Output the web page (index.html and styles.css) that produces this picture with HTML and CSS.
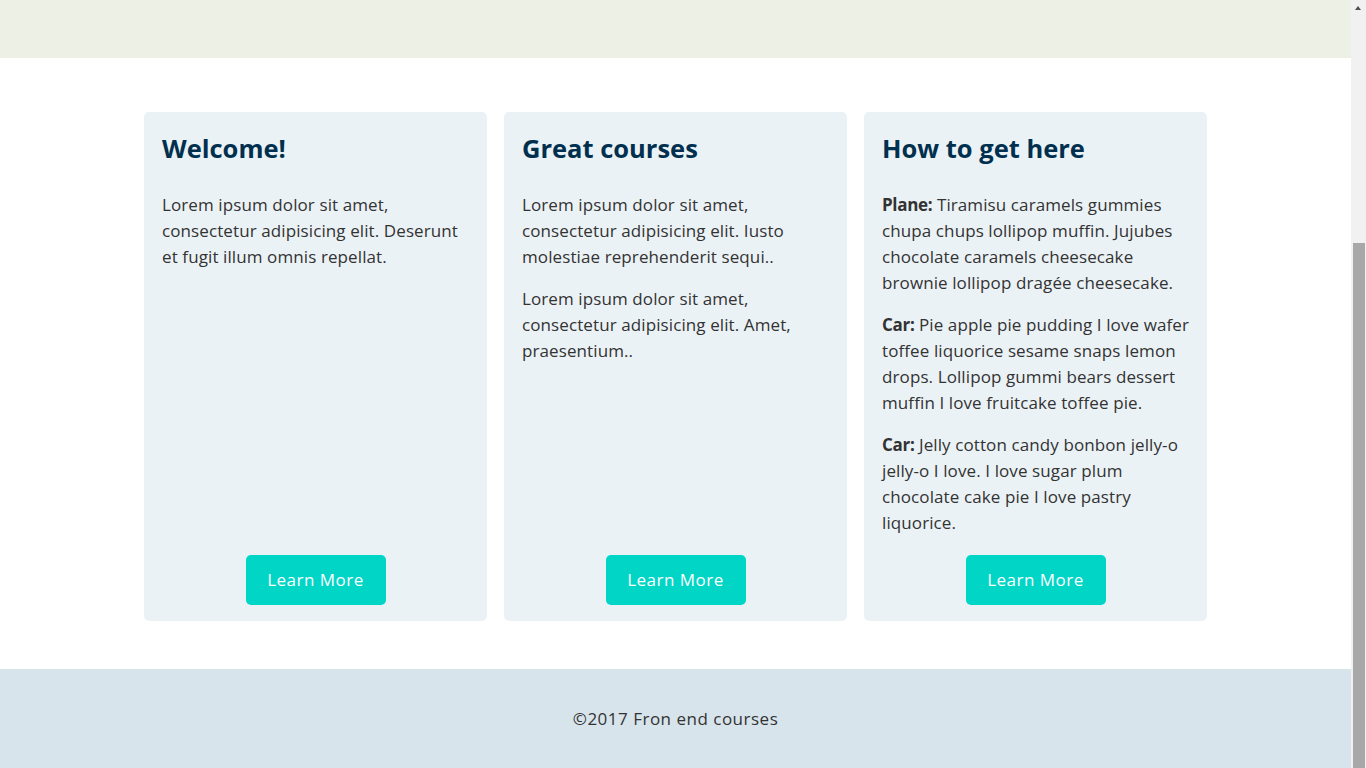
FILE: index.html
```html
<!DOCTYPE html>
<html lang="en">
<head>
<meta charset="utf-8">
<title>Fron end courses</title>
<link rel="stylesheet" href="styles.css">
</head>
<body>
<div class="page">
  <header class="site-header"></header>
  <main class="features">
    <div class="container">
      <section class="card">
        <h2 class="card-title">Welcome!</h2>
        <p>Lorem ipsum dolor sit amet, consectetur adipisicing elit. Deserunt et fugit illum omnis repellat.</p>
        <a class="btn" href="#">Learn More</a>
      </section>
      <section class="card">
        <h2 class="card-title">Great courses</h2>
        <p>Lorem ipsum dolor sit amet, consectetur adipisicing elit. Iusto molestiae reprehenderit sequi..</p>
        <p>Lorem ipsum dolor sit amet, consectetur adipisicing elit. Amet, praesentium..</p>
        <a class="btn" href="#">Learn More</a>
      </section>
      <section class="card">
        <h2 class="card-title">How to get here</h2>
        <p><strong>Plane:</strong> Tiramisu caramels gummies chupa chups lollipop muffin. Jujubes chocolate caramels cheesecake brownie lollipop dragée cheesecake.</p>
        <p><strong>Car:</strong> Pie apple pie pudding I love wafer toffee liquorice sesame snaps lemon drops. Lollipop gummi bears dessert muffin I love fruitcake toffee pie.</p>
        <p><strong>Car:</strong> Jelly cotton candy bonbon <span class="nowrap">jelly-o</span> <span class="nowrap">jelly-o</span> I love. I love sugar plum chocolate cake pie I love pastry liquorice.</p>
        <a class="btn" href="#">Learn More</a>
      </section>
    </div>
  </main>
  <footer class="site-footer">
    <p>©2017 Fron end courses</p>
  </footer>
</div>
<div class="scrollbar" aria-hidden="true">
  <span class="scrollbar-arrow"></span>
  <span class="scrollbar-thumb"></span>
</div>
</body>
</html>
```

FILE: styles.css
```css
body {
  margin: 0;
  font-family: "Open Sans", "Noto Sans", sans-serif;
  font-size: 17px;
  line-height: 26px;
  letter-spacing: 0.1px;
  color: #333;
  background: #fff;
}
.page {
  margin-right: 15px;
}
.site-header {
  height: 58px;
  background: #edf0e4;
}
.features {
  padding: 54px 0 48px;
}
.container {
  width: 1063px;
  margin: 0 auto;
  display: grid;
  grid-template-columns: repeat(3, 1fr);
  gap: 17px;
}
.card {
  background: #ebf2f6;
  border-radius: 5px;
  padding: 18px 18px 16px;
  display: flex;
  flex-direction: column;
}
.card-title {
  margin: 0 0 26px;
  font-size: 25.5px;
  line-height: 36px;
  font-weight: 700;
  letter-spacing: 0;
  color: #01304f;
}
.card p {
  margin: 0 0 16px;
}
.card p:last-of-type {
  margin-bottom: 19px;
}
.card strong { font-weight: 700; letter-spacing: -0.3px; }
.nowrap { white-space: nowrap; }
.btn {
  margin-top: auto;
  align-self: center;
  width: 140px;
  height: 50px;
  line-height: 50px;
  text-align: center;
  background: #00d5c6;
  color: #fff;
  border-radius: 5px;
  text-decoration: none;
  font-size: 17px;
  letter-spacing: 0.5px;
}
.site-footer {
  background: #d8e4ec;
  height: 99px;
  display: flex;
  align-items: center;
  justify-content: center;
}
.site-footer p { margin: 0; font-size: 17px; letter-spacing: 0.5px; }
.scrollbar {
  position: fixed;
  top: 0;
  right: 0;
  bottom: 0;
  width: 15px;
  background: #f1f1f1;
}
.scrollbar-arrow {
  position: absolute;
  top: 6px;
  left: 4px;
  width: 0;
  height: 0;
  border-left: 3.5px solid transparent;
  border-right: 3.5px solid transparent;
  border-bottom: 4px solid #505050;
}
.scrollbar-thumb {
  position: absolute;
  top: 243px;
  left: 2px;
  right: 1px;
  bottom: 0;
  background: #a8a8a8;
}
```
